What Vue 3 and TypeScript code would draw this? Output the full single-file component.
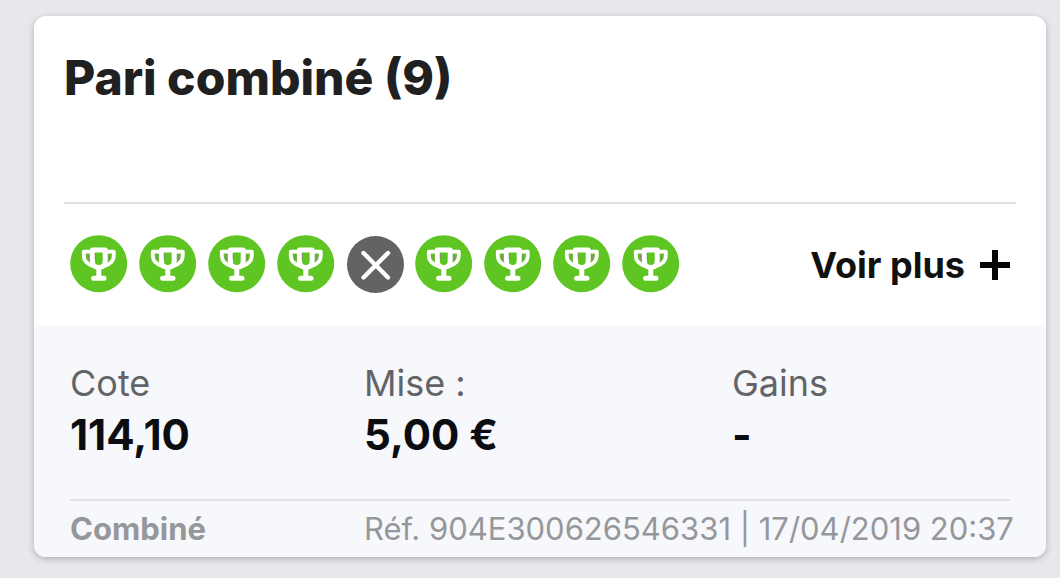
<script setup lang="ts">
type Outcome = 'won' | 'lost'

interface Figure {
  label: string
  value: string
}

const outcomes: Outcome[] = ['won', 'won', 'won', 'won', 'lost', 'won', 'won', 'won', 'won']

const figures: Figure[] = [
  { label: 'Cote', value: '114,10' },
  { label: 'Mise :', value: '5,00 €' },
  { label: 'Gains', value: '-' },
]
</script>

<template>
  <main class="page">
    <article class="card">
      <header class="head">
        <h1 class="title">Pari combiné (9)</h1>
      </header>

      <section class="results">
        <ul class="outcomes">
          <li v-for="(outcome, i) in outcomes" :key="i" class="outcome">
            <svg v-if="outcome === 'won'" viewBox="0 0 58 58" role="img" aria-label="Gagné">
              <circle cx="28.7" cy="28.7" r="28.5" fill="#5ec523" />
              <g fill="none" stroke="#fff" stroke-linecap="round" stroke-linejoin="round">
                <path stroke-width="5" d="M22.4 15H35.2V25.5C35.2 29.5 32.7 32.6 28.8 32.6S22.4 29.5 22.4 25.5Z" />
                <path stroke-width="3.8" d="M21 16.6H13.8V21C13.8 26 17.2 29.4 24 31.5M36.6 16.6H43.8V21C43.8 26 40.4 29.4 33.6 31.5" />
                <path stroke-width="5" d="M28.8 34V43M23.6 43.2H34" />
              </g>
              <path fill="none" stroke="#8d8a78" stroke-width="1.6" d="M18.4 19.5V25M39.2 19.5V25" />
              <path fill="none" stroke="#8d8a78" stroke-width="1" d="M25.3 18V24" />
            </svg>
            <svg v-else viewBox="0 0 58 58" role="img" aria-label="Perdu">
              <circle cx="29.5" cy="29.5" r="28.5" fill="#636364" />
              <path d="M17.5 18L42 42.5M42 18L17.5 42.5" stroke="#fff" stroke-width="4.4" stroke-linecap="round" />
            </svg>
          </li>
        </ul>
        <button class="more" type="button">
          Voir plus
          <svg class="plus" viewBox="0 0 30 30" aria-hidden="true">
            <path d="M15 0V30M0 15H30" stroke="#050505" stroke-width="6" />
          </svg>
        </button>
      </section>

      <footer class="summary">
        <dl class="figures">
          <div v-for="figure in figures" :key="figure.label">
            <dt>{{ figure.label }}</dt>
            <dd>{{ figure.value }}</dd>
          </div>
        </dl>
        <div class="meta">
          <strong>Combiné</strong>
          <span class="ref">Réf. 904E300626546331 | 17/04/2019 20:37</span>
        </div>
      </footer>
    </article>
  </main>
</template>

<style>
body {
  margin: 0;
  background: #e7e8ec;
}
</style>

<style scoped>
.page {
  padding: 16px 14px 20px 34px;
  font-family: Inter, "Liberation Sans", sans-serif;
}

.card {
  overflow: hidden;
  border-radius: 12px;
  background: #fff;
  box-shadow: 0 2px 6px rgba(40, 42, 50, 0.3);
}

.head {
  box-sizing: border-box;
  min-height: 188px;
  margin: 0 30px;
  padding-top: 34px;
  border-bottom: 2px solid #e2e2e4;
}

.title {
  margin: 0;
  color: #202021;
  font-size: 48px;
  line-height: 56px;
  font-weight: 800;
}

.results {
  display: flex;
  align-items: center;
  justify-content: space-between;
  padding: 31px 36px 32px;
}

.outcomes {
  display: flex;
  gap: 11px;
  margin: 0;
  padding: 0;
  list-style: none;
}

.outcome,
.outcome svg {
  display: block;
  width: 58px;
  height: 58px;
}

.more {
  display: flex;
  align-items: center;
  gap: 15px;
  padding: 2px 0 0;
  border: 0;
  background: none;
  color: #111;
  font-family: inherit;
  font-size: 36px;
  line-height: 40px;
  font-weight: 700;
  white-space: nowrap;
  cursor: pointer;
}

.plus {
  width: 30px;
  height: 30px;
}

.summary {
  padding: 38px 36px 8px;
  background: #f7f8fc;
}

.figures,
.meta {
  display: grid;
  grid-template-columns: 294fr 368fr 278fr;
  margin: 0;
}

.figures {
  padding-bottom: 36px;
  border-bottom: 2px solid #e2e3e6;
}

.figures dt {
  color: #636468;
  font-size: 36px;
  line-height: 40px;
}

.figures dd {
  margin: 0;
  padding-top: 4px;
  color: #0c0d10;
  font-size: 42px;
  line-height: 56px;
  font-weight: 700;
}

.meta {
  padding-top: 8px;
  color: #96979b;
  font-size: 31px;
  line-height: 40px;
}

.ref {
  grid-column: 2 / 4;
  white-space: nowrap;
}
</style>
